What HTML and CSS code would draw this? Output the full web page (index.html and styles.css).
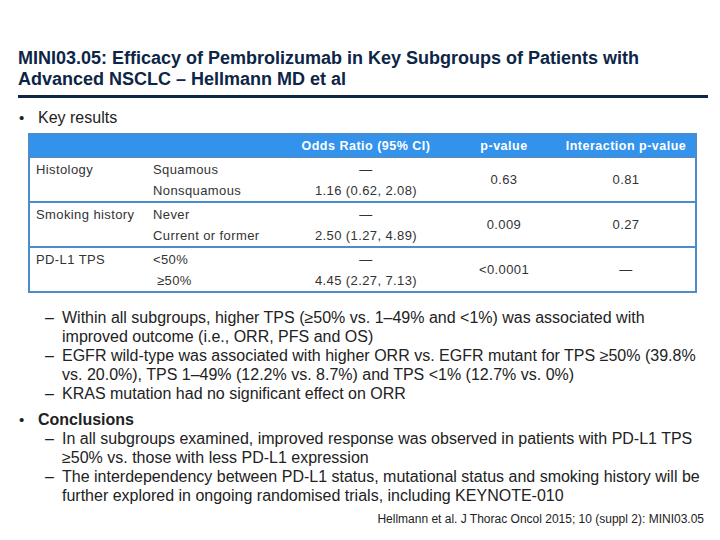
FILE: index.html
```html
<!DOCTYPE html>
<html>
<head>
<meta charset="utf-8">
<link rel="stylesheet" href="styles.css">
</head>
<body>
<div class="slide">
  <h1 class="title">MINI03.05: Efficacy of Pembrolizumab in Key Subgroups of Patients with Advanced NSCLC – Hellmann MD et al</h1>
  <div class="bullet"><span class="dot">•</span><span>Key results</span></div>
  <table class="data">
    <colgroup>
      <col class="c1"><col class="c2"><col class="c3"><col class="c4"><col class="c5">
    </colgroup>
    <thead>
      <tr><th></th><th></th><th>Odds Ratio (95% CI)</th><th>p-value</th><th>Interaction p-value</th></tr>
    </thead>
    <tbody>
      <tr class="r1"><td class="l">Histology</td><td class="l">Squamous</td><td>—</td><td rowspan="2">0.63</td><td rowspan="2">0.81</td></tr>
      <tr class="r2"><td></td><td class="l">Nonsquamous</td><td>1.16 (0.62, 2.08)</td></tr>
    </tbody>
    <tbody>
      <tr class="r1"><td class="l">Smoking history</td><td class="l">Never</td><td>—</td><td rowspan="2">0.009</td><td rowspan="2">0.27</td></tr>
      <tr class="r2"><td></td><td class="l">Current or former</td><td>2.50 (1.27, 4.89)</td></tr>
    </tbody>
    <tbody>
      <tr class="r1"><td class="l">PD-L1 TPS</td><td class="l">&lt;50%</td><td>—</td><td rowspan="2">&lt;0.0001</td><td rowspan="2">—</td></tr>
      <tr class="r2"><td></td><td class="l">&nbsp;≥50%</td><td>4.45 (2.27, 7.13)</td></tr>
    </tbody>
  </table>
  <ul class="sub first">
    <li><span class="dash">–</span><span>Within all subgroups, higher TPS (≥50% vs. 1–49% and &lt;1%) was associated with improved outcome (i.e., ORR, PFS and OS)</span></li>
    <li><span class="dash">–</span><span>EGFR wild-type was associated with higher ORR vs. EGFR mutant for TPS ≥50% (39.8% vs. 20.0%), TPS 1–49% (12.2% vs. 8.7%) and TPS &lt;1% (12.7% vs. 0%)</span></li>
    <li><span class="dash">–</span><span>KRAS mutation had no significant effect on ORR</span></li>
  </ul>
  <div class="bullet concl"><span class="dot">•</span><span>Conclusions</span></div>
  <ul class="sub">
    <li><span class="dash">–</span><span>In all subgroups examined, improved response was observed in patients with PD-L1 TPS ≥50% vs. those with less PD-L1 expression</span></li>
    <li><span class="dash">–</span><span>The interdependency between PD-L1 status, mutational status and smoking history will be further explored in ongoing randomised trials, including KEYNOTE-010</span></li>
  </ul>
  <div class="ref">Hellmann et al. J Thorac Oncol 2015; 10 (suppl 2): MINI03.05</div>
</div>
</body>
</html>
```

FILE: styles.css
```css
html, body {
  margin: 0;
  padding: 0;
  background: #ffffff;
}
.slide {
  width: 720px;
  height: 540px;
  font-family: "Liberation Sans", Arial, sans-serif;
  color: #222222;
  box-sizing: border-box;
  padding-top: 48px;
}
.title {
  margin: 0 12px 0 18px;
  padding-bottom: 5px;
  border-bottom: 3px solid #0d2546;
  font-size: 18px;
  line-height: 21px;
  font-weight: bold;
  color: #0d2546;
  padding-right: 60px;
}
.bullet {
  display: flex;
  font-size: 16px;
  line-height: 19px;
  margin-top: 10px;
  padding-left: 19px;
}
.bullet .dot {
  width: 19px;
  font-size: 15px;
}
.concl {
  margin-top: 7px;
  font-weight: bold;
}
.concl .dot { font-weight: normal; }
.data {
  margin: 6px 0 0 28px;
  width: 667px;
  border-collapse: collapse;
  border: 2px solid #4a8dcc;
  table-layout: fixed;
  font-size: 13px;
  letter-spacing: 0.4px;
  color: #333333;
}
.c1 { width: 118px; }
.c2 { width: 134px; }
.c3 { width: 170px; }
.c4 { width: 106px; }
.c5 { width: 139px; }
.data th {
  background: #3393ec;
  color: #ffffff;
  font-weight: bold;
  font-size: 12.5px;
  letter-spacing: 0.5px;
  height: 21px;
  padding: 0;
  text-align: center;
}
.data tbody {
  border-top: 2px solid #4a8dcc;
}
.data td {
  padding: 0;
  text-align: center;
  vertical-align: middle;
  white-space: nowrap;
}
.data .r1 td { height: 22px; }
.data .r2 td { height: 21px; }
.data td.l {
  text-align: left;
  padding-left: 6px;
}
.sub {
  list-style: none;
  margin: 0;
  padding: 0 14px 0 45px;
  font-size: 16px;
  line-height: 19px;
}
.sub.first {
  margin-top: 15px;
}
.sub li {
  display: flex;
}
.sub .dash {
  flex: 0 0 17px;
}
.ref {
  margin-top: 7px;
  text-align: right;
  padding-right: 16px;
  font-size: 12px;
  line-height: 14px;
}
```
